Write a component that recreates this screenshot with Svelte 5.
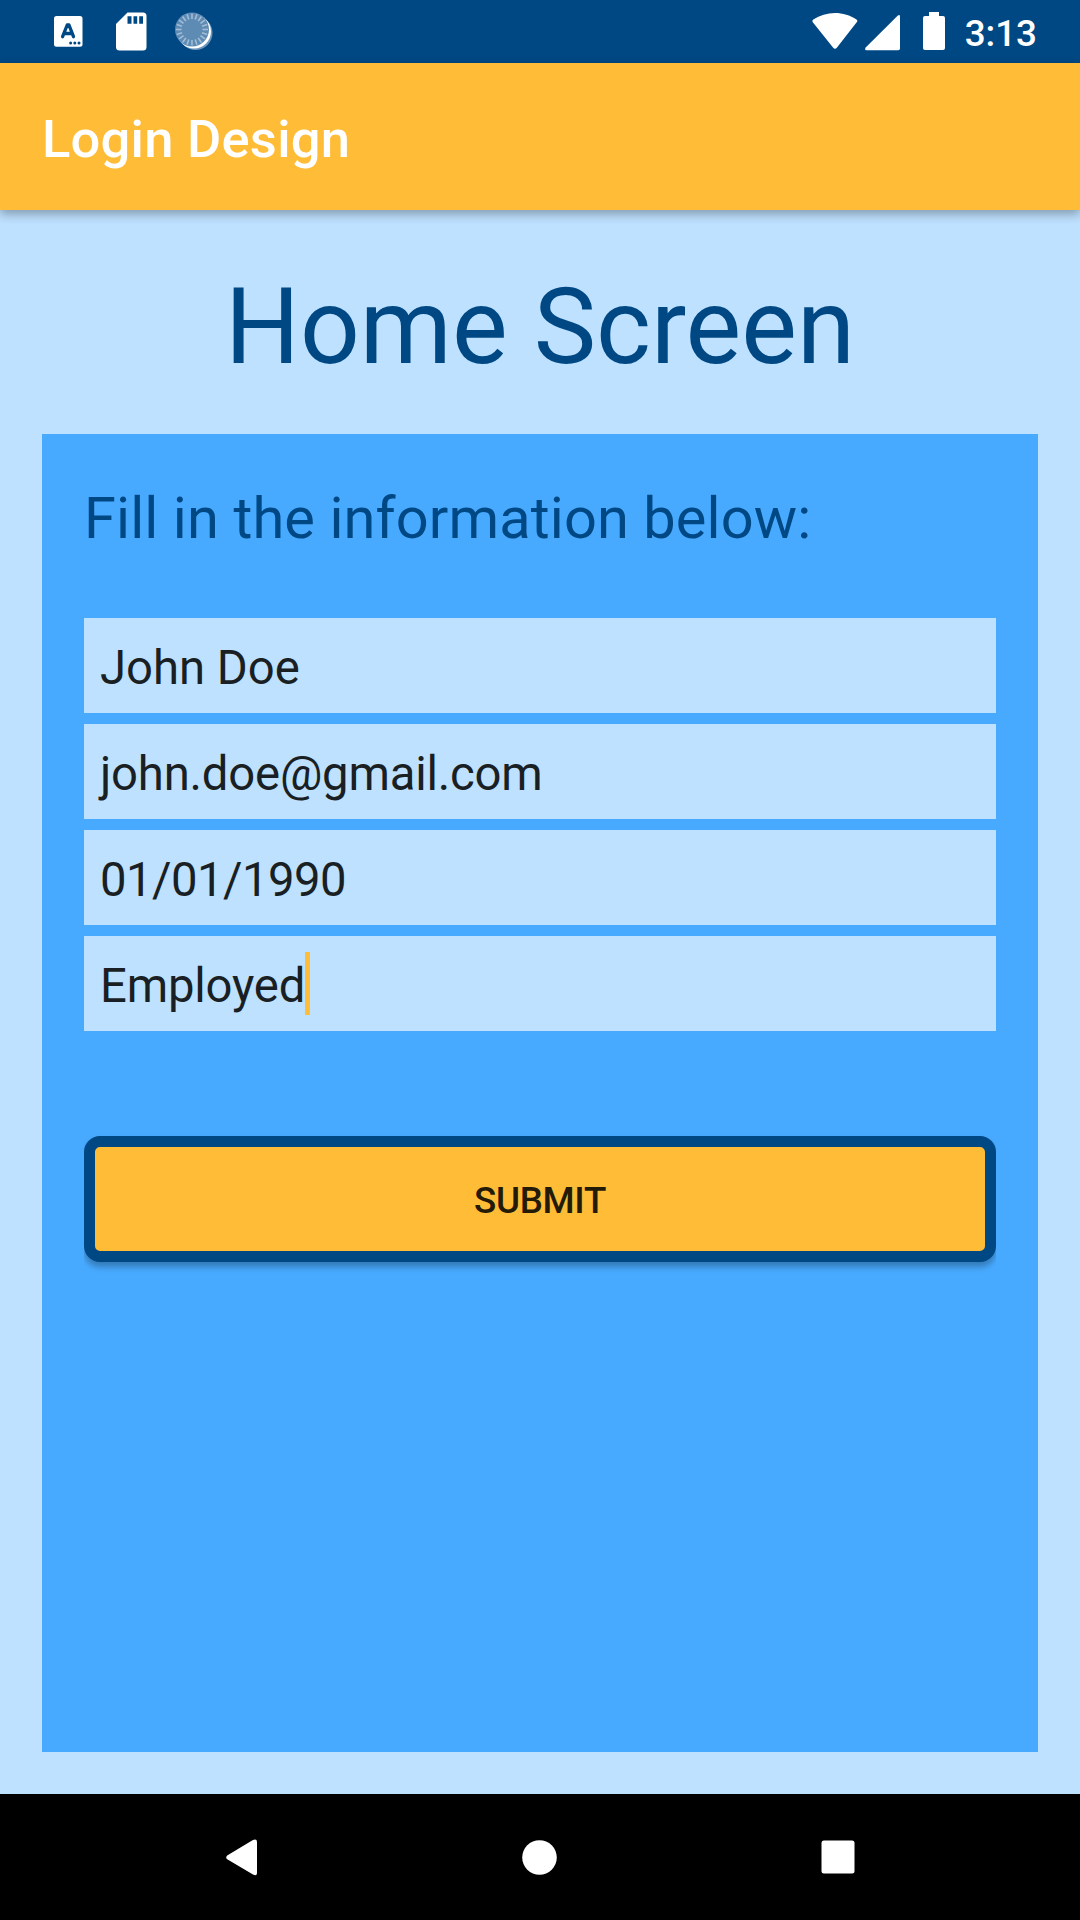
<script>
  let fields = $state([
    { name: 'name', value: 'John Doe' },
    { name: 'email', value: 'john.doe@gmail.com' },
    { name: 'birthday', value: '01/01/1990' },
    { name: 'employment', value: 'Employed', focused: true }
  ]);
  const ticks = Array.from({ length: 20 }, (_, i) => i * 18);
</script>

<div class="screen">
  <header class="statusbar">
    <div class="group">
      <svg class="keyboard" width="29" height="31" viewBox="0 0 29 31">
        <rect width="28.5" height="30.7" rx="2.5" fill="#fff" />
        <path d="M8.6 20.7 13.2 9h1.8l4.5 11.700M10.500 17.500h7.200" fill="none" stroke="#004884" stroke-width="3.300" stroke-linecap="round" stroke-linejoin="round" />
        <g fill="#004884"><circle cx="16.600" cy="27" r="1.500" /><circle cx="20.800" cy="27" r="1.500" /><circle cx="25" cy="27" r="1.500" /></g>
      </svg>
      <svg class="sd" width="31" height="39" viewBox="0 0 31 39">
        <path d="M11.500.5H27a3.500 3.500 0 0 1 3.500 3.500v31a3.500 3.500 0 0 1-3.500 3.500H3.500A3.500 3.500 0 0 1 0 35V12z" fill="#fff" />
        <path d="M11.500 4.300h4v7.500h-4zm6 0h3.700v7.500h-3.700zm5.700 0h3.800v7.500h-3.800z" fill="#004884" />
      </svg>
      <svg class="spinner" width="40" height="40" viewBox="0 0 40 40">
        <circle cx="20.500" cy="21" r="17" fill="#6f97bc" />
        <circle cx="19" cy="19.500" r="17" fill="#fff" />
        <circle cx="17" cy="17.500" r="17" fill="#5e8bb4" />
        {#each ticks as angle}
          <path d="M17 1.500v5.500" stroke="#a3bdd6" stroke-width="1.600" transform="rotate({angle} 17 17.5)" />
        {/each}
      </svg>
    </div>
    <div class="group">
      <svg width="46" height="38" viewBox="0 0 46 38">
        <path d="M.8 10.200Q-.3 8.600 1.300 7.500C14-1.300 32-1.300 44.500 7.500q1.500 1.100.4 2.600L25 35.500q-2 2.600-4 0z" fill="#fff" />
      </svg>
      <svg class="signal" width="35" height="36" viewBox="0 0 35 36">
        <path d="M.7 32.600 32.600.7Q35-.8 35 1.600V33.500q0 1.700-1.700 1.700H1.500Q-.8 35.200.7 32.600z" fill="#fff" />
      </svg>
      <svg class="battery" width="22" height="38" viewBox="0 0 22 38">
        <path d="M6 0h10v4h4q2 0 2 2v30q0 2-2 2H2q-2 0-2-2V6q0-2 2-2h4z" fill="#fff" />
      </svg>
      <span class="clock">3:13</span>
    </div>
  </header>

  <div class="appbar">Login Design</div>

  <main>
    <h1>Home Screen</h1>
    <section class="panel">
      <p>Fill in the information below:</p>
      <div class="fields">
        {#each fields as field (field.name)}
          <div class="field {field.name}">
            <span>{field.value}</span>{#if field.focused}<i class="caret"></i>{/if}
          </div>
        {/each}
      </div>
      <button>SUBMIT</button>
    </section>
  </main>

  <nav>
    <svg width="32" height="37" viewBox="0 0 32 37">
      <path d="M1.200 16.600 26.500 1.200Q31-.8 31 3v31q0 3.500-4 1.600L1.200 20.300q-2-1.800 0-3.700z" fill="#fff" />
    </svg>
    <svg class="home" width="35" height="35" viewBox="0 0 35 35"><circle cx="17.500" cy="17.500" r="17.300" fill="#fff" /></svg>
    <svg class="recent" width="34" height="34" viewBox="0 0 34 34"><rect x=".5" y=".5" width="33" height="33" rx="2.500" fill="#fff" /></svg>
  </nav>
</div>

<style>
  .screen {
    width: 1080px;
    height: 1920px;
    display: flex;
    flex-direction: column;
    background: #bee1ff;
    font-family: Roboto, sans-serif;
    overflow: hidden;
  }
  svg { display: block; flex: none; }
  .statusbar {
    box-sizing: border-box;
    height: 63px;
    flex: none;
    padding: 0 43px 0 54px;
    display: flex;
    justify-content: space-between;
    background: #004884;
  }
  .group { display: flex; align-items: flex-start; padding-top: 12px; }
  .keyboard { margin-top: 4px; }
  .sd { margin-left: 33px; }
  .spinner { margin-left: 28px; }
  .signal { margin: 3px 0 0 7px; }
  .battery { margin-left: 23px; }
  .clock {
    margin-left: 20px;
    color: #fff;
    font-size: 36.75px;
    font-weight: 500;
    line-height: 43px;
  }
  .appbar {
    box-sizing: border-box;
    height: 147px;
    flex: none;
    padding: 4px 42px 0;
    display: flex;
    align-items: center;
    background: #ffbc37;
    color: #fff;
    font-size: 52.5px;
    font-weight: 500;
    letter-spacing: 0.24px;
    box-shadow: 0 4px 10px rgba(0, 0, 0, 0.32);
    z-index: 1;
  }
  main {
    flex: 1;
    padding: 43px 42px 42px;
    display: flex;
    flex-direction: column;
  }
  h1 {
    margin: 0 0 31px;
    height: 150px;
    line-height: 150px;
    font-size: 105px;
    font-weight: 400;
    color: #004884;
    text-align: center;
  }
  .panel {
    flex: 1;
    padding: 42px;
    display: flex;
    flex-direction: column;
    background: #48aaff;
  }
  p {
    margin: 0 0 58px;
    height: 84px;
    line-height: 84px;
    font-size: 57.75px;
    letter-spacing: 0.1px;
    color: #004884;
  }
  .fields { display: flex; flex-direction: column; gap: 11px; }
  .field {
    box-sizing: border-box;
    height: 95px;
    padding: 0 16px;
    display: flex;
    align-items: center;
    background: #bee1ff;
    color: #191f23;
    font-size: 47.25px;
  }
  .field span { padding-top: 5px; }
  .email, .employment { letter-spacing: -0.2px; }
  .birthday { letter-spacing: -0.55px; }
  .caret { width: 5px; height: 63px; background: #ffbc37; }
  button {
    box-sizing: border-box;
    height: 126px;
    margin-top: 105px;
    padding: 3px 0 0;
    border: 11px solid #004884;
    border-radius: 16px;
    background: #ffbc37;
    color: #231a08;
    font: 500 36.75px Roboto, sans-serif;
    letter-spacing: -0.3px;
    box-shadow: 0 5px 6px rgba(0, 0, 0, 0.28);
    clip-path: inset(-4px 0 -14px);
  }
  nav {
    box-sizing: border-box;
    height: 126px;
    flex: none;
    padding: 0 225px 0 226px;
    display: flex;
    align-items: center;
    justify-content: space-between;
    background: #000;
  }
</style>
